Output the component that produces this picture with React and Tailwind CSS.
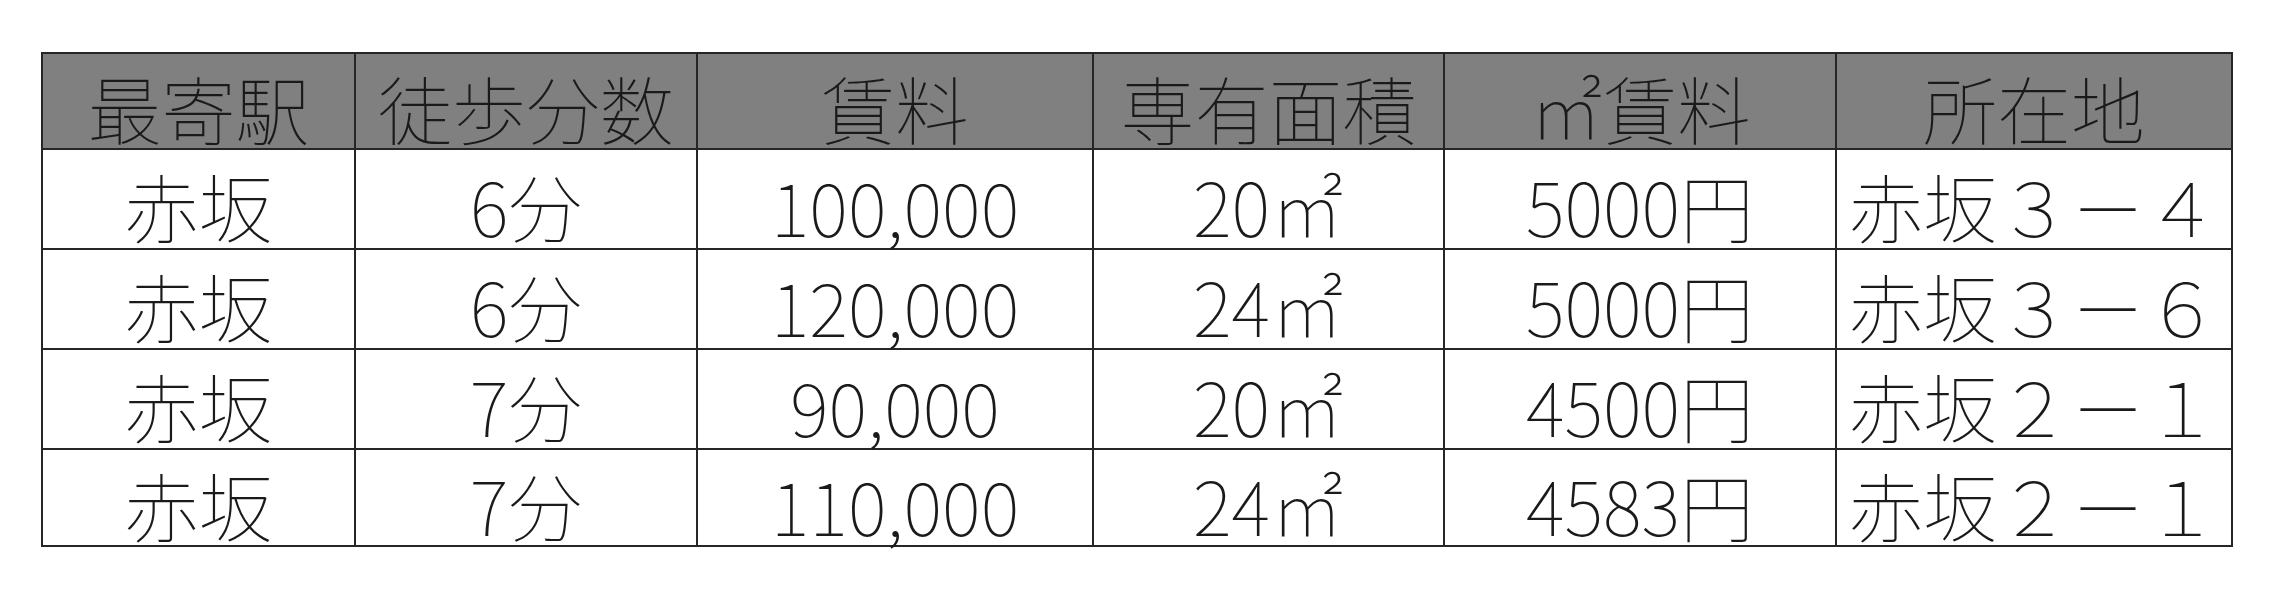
import React from "react";

const headers = ["最寄駅", "徒歩分数", "賃料", "専有面積", "㎡賃料", "所在地"];
const rows = [
  ["赤坂", "6分", "100,000", "20㎡", "5000円", "赤坂３－４"],
  ["赤坂", "6分", "120,000", "24㎡", "5000円", "赤坂３－６"],
  ["赤坂", "7分", "90,000", "20㎡", "4500円", "赤坂２－１"],
  ["赤坂", "7分", "110,000", "24㎡", "4583円", "赤坂２－１"],
];

const rowHeights = ["h-[96px]", "h-[100px]", "h-[100px]", "h-[100px]", "h-[97px]"];

export default function App() {
  return (
    <div className="w-[2273px] h-[600px] bg-white pt-[52px] pl-[41px]">
      <div
        className="grid grid-cols-[313px_342px_396px_351px_392px_396px] w-max border-l-2 border-t-2 border-[#262626] text-[74px] leading-none text-[#1a1a1a] font-thin"
        style={{ fontFamily: '"Noto Sans CJK JP", "Noto Sans", sans-serif' }}
      >
        {headers.map((h) => (
          <div
            key={h}
            className={`${rowHeights[0]} bg-[#808080] border-r-2 border-b-2 border-[#262626] flex items-center justify-center pt-[12px] whitespace-nowrap`}
          >
            {h}
          </div>
        ))}
        {rows.map((r, i) =>
          r.map((c, j) => (
            <div
              key={i + "-" + j}
              className={`${rowHeights[i + 1]} bg-white border-r-2 border-b-2 border-[#262626] flex items-center justify-center pt-[12px] whitespace-nowrap`}
            >
              {c}
            </div>
          ))
        )}
      </div>
    </div>
  );
}
